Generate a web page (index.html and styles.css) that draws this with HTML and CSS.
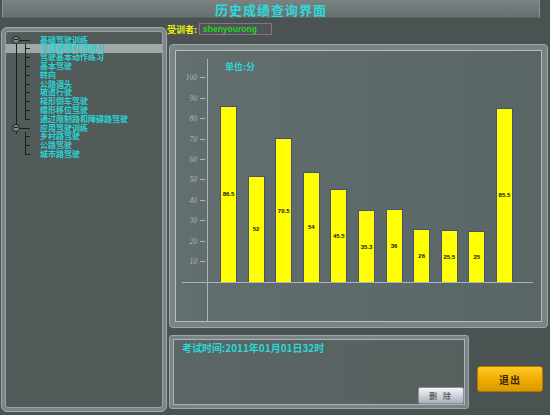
FILE: index.html
```html
<!DOCTYPE html>
<html lang="zh-CN">
<head>
<meta charset="UTF-8">
<title>历史成绩查询界面</title>
<link rel="stylesheet" href="styles.css">
</head>
<body>

<div class="screen">

<div class="titlebar"><h1>历史成绩查询界面</h1></div>

<div class="main">

<!-- left: course tree -->
<div class="tree-panel">
<div class="tree-inner">
<ul class="tree">
<li class="group first">
<div class="row head"><span class="toggle"></span>基础驾驶训练</div>
<ul class="children">
<li class="row sel">手通道通灯语练习</li>
<li class="row">驾驶基本动作练习</li>
<li class="row">基本驾驶</li>
<li class="row">转向</li>
<li class="row">公路调头</li>
<li class="row">坡道行驶</li>
<li class="row">梯形倒车驾驶</li>
<li class="row">蝶形移位驾驶</li>
<li class="row last">通过限制路和障碍路驾驶</li>
</ul>
</li>
<li class="group">
<div class="row head"><span class="toggle"></span>应用驾驶训练</div>
<ul class="children">
<li class="row">乡村路驾驶</li>
<li class="row">公路驾驶</li>
<li class="row last">城市路驾驶</li>
</ul>
</li>
</ul>
</div>
</div>

<!-- right: score chart -->
<div class="right">

<div class="trainee">
<span class="trainee-label">受训者:</span>
<span class="trainee-name">shenyourong</span>
</div>

<div class="chart-frame">
<div class="chart">
<div class="plot-row">
<div class="ticks">
<div class="tick"><i>100</i><b></b></div>
<div class="tick"><i>90</i><b></b></div>
<div class="tick"><i>80</i><b></b></div>
<div class="tick"><i>70</i><b></b></div>
<div class="tick"><i>60</i><b></b></div>
<div class="tick"><i>50</i><b></b></div>
<div class="tick"><i>40</i><b></b></div>
<div class="tick"><i>30</i><b></b></div>
<div class="tick"><i>20</i><b></b></div>
<div class="tick"><i>10</i><b></b></div>
</div>
<div class="plot">
<div class="unit">单位:分</div>
<div class="bar-row">
<div class="bar" style="height:176.5px">86.5</div>
<div class="bar" style="height:106.1px">52</div>
<div class="bar" style="height:143.8px">70.5</div>
<div class="bar" style="height:110.2px">54</div>
<div class="bar" style="height:92.8px">45.5</div>
<div class="bar" style="height:72px">35.3</div>
<div class="bar" style="height:73.4px">36</div>
<div class="bar" style="height:53px">26</div>
<div class="bar" style="height:52px">25.5</div>
<div class="bar" style="height:51px">25</div>
<div class="bar" style="height:174.4px">85.5</div>
</div>
</div>
</div>
<div class="axis-tail"></div>
</div>
</div>

<div class="bottom-row">
<div class="info-frame">
<div class="info">
<div class="exam-time">考试时间:2011年01月01日32时</div>
<button class="btn-del">删 除</button>
</div>
</div>
<button class="btn-exit">退出</button>
</div>

</div>
</div>
</div>

</body>
</html>
```

FILE: styles.css
```css
*{box-sizing:border-box;}

body{
    margin:0;
    background:#4b5252;
    font-family:"Liberation Sans","Noto Sans CJK SC",sans-serif;
}

.screen{
    width:550px;
    height:415px;
    overflow:hidden;
    background:#4b5252;
}

/* Title */
.titlebar{
    height:18px;
    margin:0 10px 0 2px;
    background:linear-gradient(180deg,#7a8282,#667070);
    border-bottom:1px solid #5a6262;
    border-left:1px solid #8a9292;
    border-right:1px solid #8a9292;
}

.titlebar h1{
    margin:0;
    text-align:center;
    font-size:13px;
    line-height:19px;
    letter-spacing:1px;
    color:#30d8d8;
    font-weight:bold;
    font-family:"Noto Sans CJK SC",sans-serif;
}

.main{
    display:flex;
    padding-top:4px;
}

/* Tree panel */
.tree-panel{
    margin:5px 0 0 1px;
    width:166px;
    height:385px;
    border:1px solid #a0aaaa;
    border-radius:6px;
    background:#7c8686;
    padding:3px;
}

.tree-inner{
    height:100%;
    border:1px solid #9aa4a4;
    border-radius:3px;
    background:#525a5a;
    padding-top:3.6px;
}

.tree,.children{
    list-style:none;
    margin:0;
    padding:0;
}

.group{position:relative;}

.row{
    position:relative;
    height:8.8px;
    line-height:8.8px;
    padding-left:34px;
    font-size:8px;
    font-weight:bold;
    color:#26d6d6;
    white-space:nowrap;
    font-family:"Noto Sans CJK SC",sans-serif;
}

.row.sel{background:#a2a7a7;}

.toggle{
    position:absolute;
    left:6px;
    top:0.4px;
    width:8px;
    height:8px;
    border:1px solid #1b2020;
    border-radius:50%;
    background:#7d8585;
    z-index:1;
}

.toggle::after{
    content:"";
    position:absolute;
    left:1px;
    right:1px;
    top:2.5px;
    border-top:1px solid #1b2020;
}

.head::before{
    content:"";
    position:absolute;
    left:13px;
    width:11px;
    top:4px;
    border-top:1px solid #1b2020;
}

.group.first::after{
    content:"";
    position:absolute;
    left:10px;
    top:8px;
    height:90px;
    border-left:1px solid #1b2020;
}

.children .row::before{
    content:"";
    position:absolute;
    left:19px;
    width:5px;
    top:4px;
    border-top:1px solid #1b2020;
}

.children .row::after{
    content:"";
    position:absolute;
    left:19px;
    top:0;
    bottom:0;
    border-left:1px solid #1b2020;
}

.children .row.last::after{bottom:4px;}

/* Right column */
.right{
    margin-left:2px;
    width:379px;
}

.trainee{
    display:flex;
    align-items:center;
    height:14px;
    margin-bottom:8px;
}

.trainee-label{
    font-size:9px;
    font-weight:bold;
    color:#eeee10;
    width:32px;
    margin-left:-2px;
    font-family:"Noto Sans CJK SC",sans-serif;
}

.trainee-name{
    width:73px;
    height:12px;
    line-height:10px;
    padding-left:3px;
    border:1px solid #8c6e8c;
    background:#4f5555;
    color:#22d622;
    font-size:8.5px;
    font-weight:bold;
}

/* Chart */
.chart-frame{
    height:284px;
    border:1px solid #9ca6a6;
    border-radius:4px;
    background:#7a8484;
    padding:5px;
}

.chart{
    height:100%;
    border:1px solid #b4bebe;
    background:linear-gradient(90deg,#636e6e,#5a6666);
    padding:8px 8px 0 6px;
    display:flex;
    flex-direction:column;
}

.plot-row{
    display:flex;
    height:224px;
    border-bottom:1px solid #a7b5c2;
}

.ticks{
    width:25px;
    padding-top:8.8px;
}

.tick{
    height:20.4px;
    display:flex;
    align-items:center;
    justify-content:flex-end;
}

.tick i{
    font-size:7.5px;
    color:#aab5b9;
    font-family:"Liberation Serif",serif;
}

.tick b{
    width:5px;
    border-top:1px solid #aab5b9;
    margin:0 2px 0 3px;
}

.plot{
    flex:1;
    border-left:1px solid #a7b5c2;
    display:flex;
    flex-direction:column;
}

.unit{
    height:16px;
    padding:3px 0 0 17px;
    font-size:9px;
    line-height:10px;
    font-weight:bold;
    color:#2ad8d8;
    font-family:"Noto Sans CJK SC",sans-serif;
}

.bar-row{
    flex:1;
    display:flex;
    align-items:flex-end;
    padding-left:12px;
    gap:10.6px;
}

.bar{
    width:17px;
    background:#ffff00;
    border:1px solid #46507a;
    border-bottom:none;
    display:flex;
    align-items:center;
    justify-content:center;
    font-size:6px;
    font-weight:bold;
    color:#111;
}

.axis-tail{
    flex:1;
    margin-left:25px;
    border-left:1px solid #a7b5c2;
}

/* Bottom */
.bottom-row{
    display:flex;
    margin-top:7px;
}

.info-frame{
    width:300px;
    height:74px;
    border:1px solid #9ca6a6;
    border-radius:3px;
    background:#7a8484;
    padding:3px;
}

.info{
    height:100%;
    border:1px solid #aab4b4;
    background:linear-gradient(90deg,#5c6666,#56605f);
    display:flex;
    flex-direction:column;
    padding:2px 0 0 8px;
}

.exam-time{
    font-size:10px;
    line-height:12px;
    font-weight:bold;
    color:#2ad8d8;
    font-family:"Noto Sans CJK SC",sans-serif;
}

.btn-del{
    margin-top:auto;
    align-self:flex-end;
    width:46px;
    height:17px;
    padding:0;
    border:1px solid #8a8f9a;
    border-radius:2px;
    background:linear-gradient(180deg,#f4f4f8,#c9ccd8 60%,#a9aec2);
    color:#333;
    font-size:8px;
    letter-spacing:2px;
    font-family:"Noto Sans CJK SC",sans-serif;
}

.btn-exit{
    margin:31px 0 0 8px;
    width:66px;
    height:26px;
    padding:0;
    border:1px solid #b07800;
    border-radius:3px;
    background:linear-gradient(180deg,#ffc82a,#f0ad00 50%,#d99a00);
    color:#3a2700;
    font-size:10px;
    font-weight:bold;
    letter-spacing:1px;
    font-family:"Noto Sans CJK SC",sans-serif;
}
```
